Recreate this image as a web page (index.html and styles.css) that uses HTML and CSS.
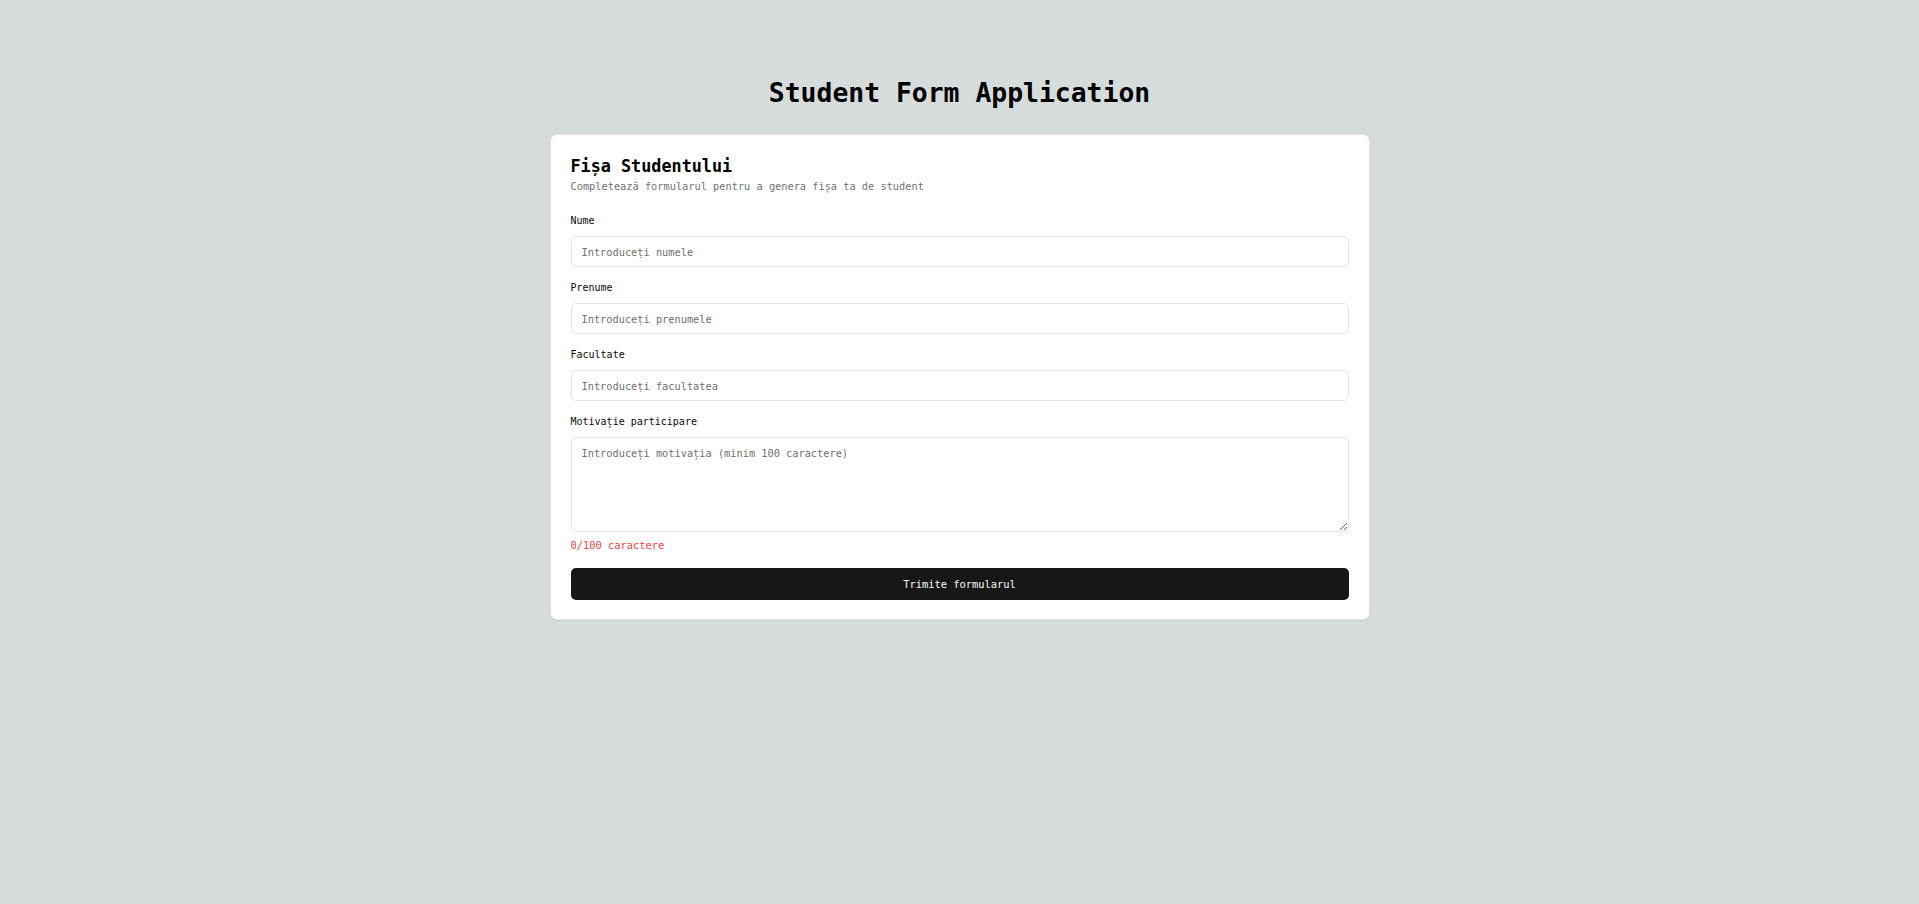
FILE: index.html
```html
<!DOCTYPE html>
<html lang="ro">
<head>
<meta charset="utf-8">
<title>Student Form Application</title>
<link rel="stylesheet" href="styles.css">
</head>
<body>
<main class="page">
  <h1 class="page-title">Student Form Application</h1>
  <section class="card">
    <header class="card-header">
      <h2 class="card-title">Fișa Studentului</h2>
      <p class="card-desc">Completează formularul pentru a genera fișa ta de student</p>
    </header>
    <form class="form">
      <div class="field">
        <label class="label" for="nume">Nume</label>
        <input class="input" id="nume" type="text" placeholder="Introduceți numele">
      </div>
      <div class="field">
        <label class="label" for="prenume">Prenume</label>
        <input class="input" id="prenume" type="text" placeholder="Introduceți prenumele">
      </div>
      <div class="field">
        <label class="label" for="facultate">Facultate</label>
        <input class="input" id="facultate" type="text" placeholder="Introduceți facultatea">
      </div>
      <div class="field field-last">
        <label class="label" for="motivatie">Motivație participare</label>
        <textarea class="textarea" id="motivatie" placeholder="Introduceți motivația (minim 100 caractere)"></textarea>
        <p class="counter">0/100 caractere</p>
      </div>
      <button class="submit" type="button">Trimite formularul</button>
    </form>
  </section>
</main>
</body>
</html>
```

FILE: styles.css
```css
* {
  box-sizing: border-box;
}

html, body {
  margin: 0;
  padding: 0;
}

body {
  background: #d6dcdc;
  font-family: "DejaVu Sans Mono", "Liberation Mono", monospace;
  color: #0a0a0a;
  min-height: 904px;
}

.page {
  display: flex;
  flex-direction: column;
  align-items: center;
  padding-top: 77px;
}

.page-title {
  margin: 0 0 25px;
  font-size: 26.4px;
  line-height: 32px;
  font-weight: bold;
  color: #000;
}

.card {
  width: 820px;
  background: #ffffff;
  border: 1px solid #e3e6e6;
  border-radius: 7px;
  box-shadow: 0 1px 2px rgba(0, 0, 0, 0.06);
  padding: 21px 20px 19px;
}

.card-header {
  display: flex;
  flex-direction: column;
  gap: 3px;
}

.card-title {
  margin: 0;
  font-size: 16.8px;
  line-height: 20px;
  font-weight: bold;
  color: #000;
}

.card-desc {
  margin: 0;
  font-size: 10.3px;
  line-height: 14px;
  color: #71717a;
}

.form {
  display: flex;
  flex-direction: column;
  margin-top: 21px;
}

.field {
  display: flex;
  flex-direction: column;
  margin-bottom: 14px;
}

.field-last {
  margin-bottom: 0;
}

.label {
  font-size: 10px;
  line-height: 14px;
  color: #0a0a0a;
  margin-bottom: 8px;
}

.input,
.textarea {
  width: 100%;
  font-family: "DejaVu Sans Mono", "Liberation Mono", monospace;
  font-size: 10.3px;
  color: #0a0a0a;
  background: #fff;
  border: 1px solid #e4e4e7;
  border-radius: 5px;
  padding: 0 10px;
  outline: none;
}

.input {
  height: 31px;
}

.textarea {
  height: 95px;
  padding: 8px 10px;
  line-height: 14px;
  resize: vertical;
}

.input::placeholder,
.textarea::placeholder {
  color: #6f6f6f;
}

.counter {
  margin: 6px 0 0;
  font-size: 10.4px;
  line-height: 14px;
  color: #ef4444;
}

.submit {
  margin-top: 16px;
  height: 32px;
  width: 100%;
  border: none;
  border-radius: 5px;
  background: #171717;
  color: #fafafa;
  font-family: "DejaVu Sans Mono", "Liberation Mono", monospace;
  font-size: 10.4px;
  cursor: pointer;
}
```
